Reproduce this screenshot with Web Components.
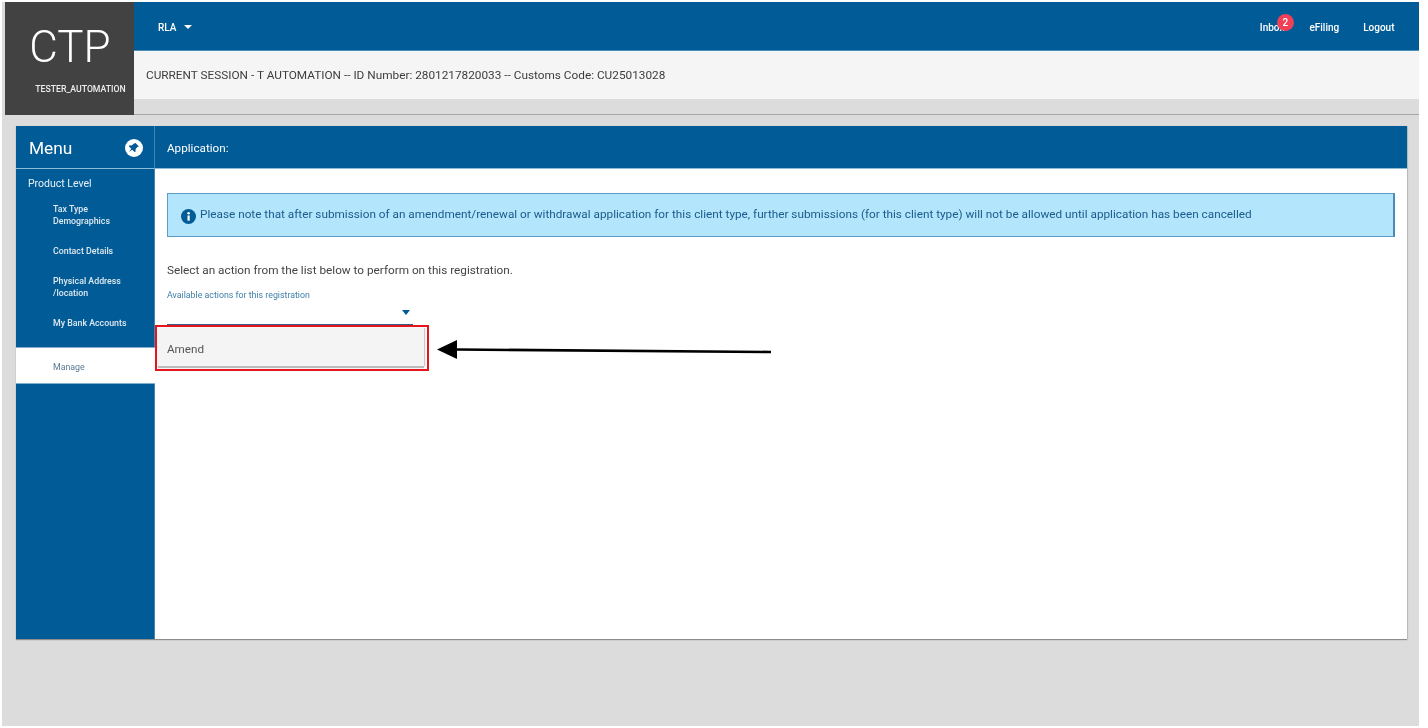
<!DOCTYPE html>
<html lang="en"><head><meta charset="utf-8"><title>CTP</title>
<style>
html,body{margin:0;padding:0;background:#fff;overflow:hidden}
body{font-family:Roboto,"Liberation Sans",sans-serif;width:1428px;height:728px}
</style></head><body>
<ctp-app>
  <ctp-header slot="header"></ctp-header>
  <ctp-card>
    <ctp-sidebar slot="side">
      <nav-heading>Product Level</nav-heading>
      <nav-item>Tax Type<br>Demographics</nav-item>
      <nav-item>Contact Details</nav-item>
      <nav-item>Physical Address<br>/location</nav-item>
      <nav-item>My Bank Accounts</nav-item>
      <nav-item active>Manage</nav-item>
    </ctp-sidebar>
    <ctp-alert>Please note that after submission of an amendment/renewal or withdrawal application for this client type, further submissions (for this client type) will not be allowed until application has been cancelled</ctp-alert>
    <ctp-action-select></ctp-action-select>
  </ctp-card>
</ctp-app>
<script>
function def(name,html){
  customElements.define(name,class extends HTMLElement{
    constructor(){super();this.attachShadow({mode:'open'}).innerHTML=html;}
  });
}
def('ctp-app',`<style>
:host{display:block;margin:2px 0 0 2px;width:1417px;height:724px;background:#dcdcdc;font-family:Roboto,"Liberation Sans",sans-serif;overflow:hidden;filter:blur(.35px)}
.body{padding:11px 12px 0 14px}
</style><slot name="header"></slot><div class="body"><slot></slot></div>`);

def('ctp-header',`<style>
:host{display:flex;height:113px;margin-left:3px;border-bottom:1px solid #a9a5a3;box-sizing:border-box}
.logo{width:129px;background:#424242;color:#fff;display:flex;flex-direction:column;align-items:center;margin-bottom:-1px;position:relative;z-index:1}
.ctp{font-size:44px;font-weight:300;line-height:52px;margin-top:19px;margin-left:1px}
.user{font-size:8.7px;font-weight:500;margin-top:11px;margin-left:22px;color:#eee;white-space:nowrap}
.right{flex:1;display:flex;flex-direction:column}
.top{height:49px;background:#005b96;border-bottom:1px solid #4a90bd;box-sizing:border-box;display:flex;align-items:center;color:#fff;font-size:10px;font-weight:500;padding:2px 24.5px 0 24px}
.caret{display:inline-block;border:4px solid transparent;border-top-color:#fff;border-bottom:0;margin-left:8px;vertical-align:2px}
.links{margin-left:auto;display:flex;gap:24px;padding-top:1px}
.inbox{position:relative;margin-right:1px}
.badge{position:absolute;left:17px;top:-8px;width:17px;height:17px;border-radius:50%;background:#ef4056;color:#fff;font-size:10px;display:flex;align-items:center;justify-content:center}
.session{height:48px;background:#f5f5f5;display:flex;align-items:center;padding-left:12px;font-size:11.8px;color:#3d3d3d;white-space:nowrap}
</style>
<div class="logo"><div class="ctp">CTP</div><div class="user">TESTER_AUTOMATION</div></div>
<div class="right">
<div class="top"><span>RLA<span class="caret"></span></span>
<div class="links"><span class="inbox">Inbox<span class="badge">2</span></span><span>eFiling</span><span>Logout</span></div></div>
<div class="session">CURRENT SESSION - T AUTOMATION -- ID Number: 2801217820033 -- Customs Code: CU25013028</div>
</div>`);

def('ctp-card',`<style>
:host{display:grid;grid-template-columns:139px 1fr;grid-template-rows:43px 1fr;height:513px;background:#fff;box-shadow:0 1px 1px rgba(0,0,0,.35),1px 0 1px rgba(0,0,0,.1)}
.menu{background:#005b96;color:#fff;display:flex;align-items:center;justify-content:space-between;padding:2px 11px 0 13px;font-size:17.3px;border-right:1px solid #3f86b5;border-bottom:1px solid #8cbbd8}
.title{background:#005b96;color:#fff;display:flex;align-items:center;padding:2px 0 0 12px;font-size:11.7px;border-bottom:1px solid #8cbbd8}
.content{padding:24px 12px 0 12px;position:relative;color:#444}
svg{display:block}
.side{min-height:0;display:flex}
</style>
<div class="menu"><span>Menu</span>
<svg width="18" height="18" viewBox="0 0 18 18"><circle cx="9" cy="9" r="9" fill="#fff"/><path d="M10.5 4l3.5 3.5-1.6.4-1.9 2.4.2 2.2-1.2.5-2.3-2.3-3.2 2.3 2.3-3.2-2.3-2.3.5-1.2 2.2.2 2.4-1.9z" fill="#005b96"/></svg></div>
<div class="title">Application:</div>
<div class="side"><slot name="side"></slot></div>
<div class="content"><slot></slot></div>`);

def('ctp-sidebar',`<style>
:host{display:block;flex:1;background:#005b96;border-right:1px solid #3f86b5;color:#fff;padding-top:9px}
</style><slot></slot>`);

def('nav-heading',`<style>
:host{display:block;font-size:10.5px;line-height:12px;padding-left:12px;margin-bottom:13px;color:#e8f0f6}
</style><slot></slot>`);

customElements.define('nav-item',class extends HTMLElement{
  constructor(){super();this.attachShadow({mode:'open'}).innerHTML=`<style>
:host{display:block;font-size:8.8px;line-height:12px;padding:0 0 18px 37px;color:#dfe9f1;font-weight:500}
:host([active]){background:#fff;color:#5d7a92;font-weight:400;margin-top:0;padding:14px 0 10px 37px;border-bottom:1px solid #7fb0cf;border-top:1px solid #7fb0cf;margin-right:-1px;position:relative;height:11px;line-height:11px}
</style><slot></slot>`;}
});

def('ctp-alert',`<style>
:host{display:flex;align-items:center;height:44px;box-sizing:border-box;background:#b3e5fc;border:1px solid #5e9cc5;border-right:2px solid #4f88b0;padding:0 0 0 13px;font-size:11.78px;color:#1a5c8c;white-space:nowrap}
svg{flex:none;margin-right:4px;margin-top:2px}
span{margin-top:-2px}
</style>
<svg width="15" height="15" viewBox="0 0 15 15"><circle cx="7.5" cy="7.5" r="7.5" fill="#005b96"/><rect x="6.5" y="6.5" width="2.2" height="5.2" fill="#fff"/><circle cx="7.6" cy="4.3" r="1.3" fill="#fff"/></svg><span><slot></slot></span>`);

def('ctp-action-select',`<style>
:host{display:block;position:relative;color:#444}
.prompt{font-size:11.77px;margin-top:26px;line-height:14px}
.label{font-size:8.8px;color:#3f7fa8;margin-top:13px;line-height:10px}
.field{width:246px;height:24px;border-bottom:2px solid #2d5f8a;box-sizing:content-box;position:relative}
.field i{position:absolute;right:3px;top:10px;border:4px solid transparent;border-top:5px solid #005b96;border-bottom:0}
.menu{position:absolute;left:-9px;top:65px;width:266px;height:38px;background:#f4f4f4;box-shadow:0 2px 1px #bbb,1px 0 1px #ccc;display:flex;align-items:center;padding:4px 0 0 9px;box-sizing:border-box;font-size:11.7px;color:#555}
.box{position:absolute;left:-12px;top:62px;width:274px;height:46px;border:2px solid #e8141c;box-sizing:border-box}
.arrow{position:absolute;left:270px;top:76px}
</style>
<div class="prompt">Select an action from the list below to perform on this registration.</div>
<div class="label">Available actions for this registration</div>
<div class="field"><i></i></div>
<div class="menu">Amend</div>
<div class="box"></div>
<svg class="arrow" width="336" height="26" viewBox="0 0 336 26"><path d="M20 10.5L334 13" stroke="#000" stroke-width="2.6" fill="none"/><path d="M0 10.5L20 1V20z" fill="#000"/></svg>`);
</script>
</body></html>
